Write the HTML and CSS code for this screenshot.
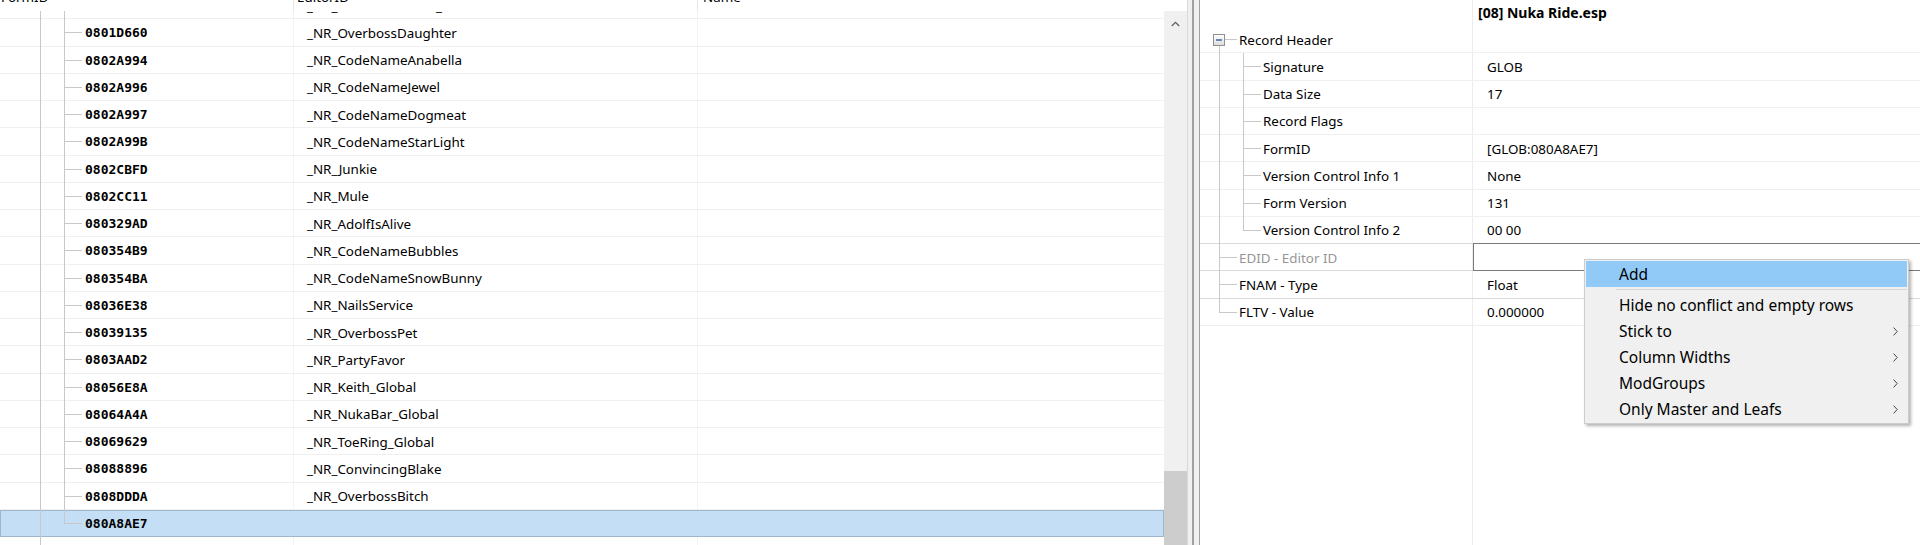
FILE: index.html
```html
<!DOCTYPE html>
<html lang="en">
<head>
  <meta charset="UTF-8">
  <title>xEdit - Nuka Ride.esp</title>
  <link rel="stylesheet" href="styles.css">
</head>
<body>

<div class="app">

  <!-- record list -->
  <section class="left">
    <div class="vt-header">
      <div class="hcol h-form">FormID</div>
      <div class="hcol h-edid">EditorID</div>
      <div class="hcol h-name">Name</div>
    </div>

    <div class="vt-body">
      <div class="rows">
        <div class="rows-in">
          <div class="row"><div class="c-form"><span class="g0"></span><span class="g-line"></span><span class="g-line"></span></div><div class="c-edid">_NR_OverbossGuard_Global</div><div class="c-name"></div></div>
          <div class="row"><div class="c-form"><span class="g0"></span><span class="g-line"></span><span class="g-branch"></span><span class="fid">0801D660</span></div><div class="c-edid">_NR_OverbossDaughter</div><div class="c-name"></div></div>
          <div class="row"><div class="c-form"><span class="g0"></span><span class="g-line"></span><span class="g-branch"></span><span class="fid">0802A994</span></div><div class="c-edid">_NR_CodeNameAnabella</div><div class="c-name"></div></div>
          <div class="row"><div class="c-form"><span class="g0"></span><span class="g-line"></span><span class="g-branch"></span><span class="fid">0802A996</span></div><div class="c-edid">_NR_CodeNameJewel</div><div class="c-name"></div></div>
          <div class="row"><div class="c-form"><span class="g0"></span><span class="g-line"></span><span class="g-branch"></span><span class="fid">0802A997</span></div><div class="c-edid">_NR_CodeNameDogmeat</div><div class="c-name"></div></div>
          <div class="row"><div class="c-form"><span class="g0"></span><span class="g-line"></span><span class="g-branch"></span><span class="fid">0802A99B</span></div><div class="c-edid">_NR_CodeNameStarLight</div><div class="c-name"></div></div>
          <div class="row"><div class="c-form"><span class="g0"></span><span class="g-line"></span><span class="g-branch"></span><span class="fid">0802CBFD</span></div><div class="c-edid">_NR_Junkie</div><div class="c-name"></div></div>
          <div class="row"><div class="c-form"><span class="g0"></span><span class="g-line"></span><span class="g-branch"></span><span class="fid">0802CC11</span></div><div class="c-edid">_NR_Mule</div><div class="c-name"></div></div>
          <div class="row"><div class="c-form"><span class="g0"></span><span class="g-line"></span><span class="g-branch"></span><span class="fid">080329AD</span></div><div class="c-edid">_NR_AdolfIsAlive</div><div class="c-name"></div></div>
          <div class="row"><div class="c-form"><span class="g0"></span><span class="g-line"></span><span class="g-branch"></span><span class="fid">080354B9</span></div><div class="c-edid">_NR_CodeNameBubbles</div><div class="c-name"></div></div>
          <div class="row"><div class="c-form"><span class="g0"></span><span class="g-line"></span><span class="g-branch"></span><span class="fid">080354BA</span></div><div class="c-edid">_NR_CodeNameSnowBunny</div><div class="c-name"></div></div>
          <div class="row"><div class="c-form"><span class="g0"></span><span class="g-line"></span><span class="g-branch"></span><span class="fid">08036E38</span></div><div class="c-edid">_NR_NailsService</div><div class="c-name"></div></div>
          <div class="row"><div class="c-form"><span class="g0"></span><span class="g-line"></span><span class="g-branch"></span><span class="fid">08039135</span></div><div class="c-edid">_NR_OverbossPet</div><div class="c-name"></div></div>
          <div class="row"><div class="c-form"><span class="g0"></span><span class="g-line"></span><span class="g-branch"></span><span class="fid">0803AAD2</span></div><div class="c-edid">_NR_PartyFavor</div><div class="c-name"></div></div>
          <div class="row"><div class="c-form"><span class="g0"></span><span class="g-line"></span><span class="g-branch"></span><span class="fid">08056E8A</span></div><div class="c-edid">_NR_Keith_Global</div><div class="c-name"></div></div>
          <div class="row"><div class="c-form"><span class="g0"></span><span class="g-line"></span><span class="g-branch"></span><span class="fid">08064A4A</span></div><div class="c-edid">_NR_NukaBar_Global</div><div class="c-name"></div></div>
          <div class="row"><div class="c-form"><span class="g0"></span><span class="g-line"></span><span class="g-branch"></span><span class="fid">08069629</span></div><div class="c-edid">_NR_ToeRing_Global</div><div class="c-name"></div></div>
          <div class="row"><div class="c-form"><span class="g0"></span><span class="g-line"></span><span class="g-branch"></span><span class="fid">08088896</span></div><div class="c-edid">_NR_ConvincingBlake</div><div class="c-name"></div></div>
          <div class="row"><div class="c-form"><span class="g0"></span><span class="g-line"></span><span class="g-branch"></span><span class="fid">0808DDDA</span></div><div class="c-edid">_NR_OverbossBitch</div><div class="c-name"></div></div>
          <div class="row selected"><div class="c-form"><span class="g0"></span><span class="g-line"></span><span class="g-branch last"></span><span class="fid">080A8AE7</span></div><div class="c-edid"></div><div class="c-name"></div></div>
          <div class="row"><div class="c-form"><span class="g0"></span><span class="g-branch"><svg class="xbox" width="12" height="12" viewBox="0 0 12 12"><rect x="0.5" y="0.5" width="11" height="11" fill="#f4f4f4" stroke="#9a9a9a"/><path d="M3 6h6M6 3v6" stroke="#1e3c96"/></svg></span></div><div class="c-edid"></div><div class="c-name"></div></div>
        </div>
      </div>
      <div class="vscroll">
        <div class="sb-arrow">
          <svg width="9" height="6" viewBox="0 0 9 6"><polyline points="0.8,5 4.5,1.3 8.2,5" fill="none" stroke="#606060" stroke-width="1.3"/></svg>
        </div>
        <div class="sb-thumb"></div>
      </div>
    </div>
  </section>

  <div class="splitter"><span class="grip"></span></div>

  <!-- record view -->
  <section class="right">
    <div class="pv-header">
      <div class="ph-label"></div>
      <div class="ph-value">[08] Nuka Ride.esp</div>
    </div>

    <div class="prow">
      <div class="p-label"><span class="pg0"></span><span class="g-branch top"><svg class="xbox" width="12" height="12" viewBox="0 0 12 12"><defs><linearGradient id="bx" x1="0" y1="0" x2="0" y2="1"><stop offset="0" stop-color="#ffffff"/><stop offset="1" stop-color="#dcdcdc"/></linearGradient></defs><rect x="0.5" y="0.5" width="11" height="11" fill="url(#bx)" stroke="#8f8f8f"/><path d="M3 6h6" stroke="#1e3c96" stroke-width="1.2"/></svg></span><span class="lbl">Record Header</span></div>
      <div class="p-value"></div>
    </div>
    <div class="prow">
      <div class="p-label"><span class="pg0"></span><span class="g-line"></span><span class="g-branch"></span><span class="lbl">Signature</span></div>
      <div class="p-value">GLOB</div>
    </div>
    <div class="prow">
      <div class="p-label"><span class="pg0"></span><span class="g-line"></span><span class="g-branch"></span><span class="lbl">Data Size</span></div>
      <div class="p-value">17</div>
    </div>
    <div class="prow">
      <div class="p-label"><span class="pg0"></span><span class="g-line"></span><span class="g-branch"></span><span class="lbl">Record Flags</span></div>
      <div class="p-value"></div>
    </div>
    <div class="prow">
      <div class="p-label"><span class="pg0"></span><span class="g-line"></span><span class="g-branch"></span><span class="lbl">FormID</span></div>
      <div class="p-value">[GLOB:080A8AE7]</div>
    </div>
    <div class="prow">
      <div class="p-label"><span class="pg0"></span><span class="g-line"></span><span class="g-branch"></span><span class="lbl">Version Control Info 1</span></div>
      <div class="p-value">None</div>
    </div>
    <div class="prow">
      <div class="p-label"><span class="pg0"></span><span class="g-line"></span><span class="g-branch"></span><span class="lbl">Form Version</span></div>
      <div class="p-value">131</div>
    </div>
    <div class="prow strong">
      <div class="p-label"><span class="pg0"></span><span class="g-line"></span><span class="g-branch last"></span><span class="lbl">Version Control Info 2</span></div>
      <div class="p-value">00 00</div>
    </div>
    <div class="prow strong">
      <div class="p-label"><span class="pg0"></span><span class="g-branch"></span><span class="lbl muted">EDID - Editor ID</span></div>
      <div class="p-value"><div class="edit"></div></div>
    </div>
    <div class="prow strong">
      <div class="p-label"><span class="pg0"></span><span class="g-branch"></span><span class="lbl">FNAM - Type</span></div>
      <div class="p-value">Float</div>
    </div>
    <div class="prow">
      <div class="p-label"><span class="pg0"></span><span class="g-branch last"></span><span class="lbl">FLTV - Value</span></div>
      <div class="p-value">0.000000</div>
    </div>
  </section>

  <!-- popup menu -->
  <div class="menu">
    <div class="mi hot">Add</div>
    <div class="msep"></div>
    <div class="mi">Hide no conflict and empty rows</div>
    <div class="mi">Stick to <svg width="5" height="9" viewBox="0 0 5 9"><polyline points="0.6,0.6 4.2,4.5 0.6,8.4" fill="none" stroke="#444" stroke-width="1"/></svg></div>
    <div class="mi">Column Widths <svg width="5" height="9" viewBox="0 0 5 9"><polyline points="0.6,0.6 4.2,4.5 0.6,8.4" fill="none" stroke="#444" stroke-width="1"/></svg></div>
    <div class="mi">ModGroups <svg width="5" height="9" viewBox="0 0 5 9"><polyline points="0.6,0.6 4.2,4.5 0.6,8.4" fill="none" stroke="#444" stroke-width="1"/></svg></div>
    <div class="mi">Only Master and Leafs <svg width="5" height="9" viewBox="0 0 5 9"><polyline points="0.6,0.6 4.2,4.5 0.6,8.4" fill="none" stroke="#444" stroke-width="1"/></svg></div>
  </div>

</div>

</body>
</html>
```

FILE: styles.css
```css
* {
  box-sizing: border-box;
}
html, body {
  margin: 0;
  height: 100%;
}
body {
  font-family: "Noto Sans", "Open Sans", sans-serif;
  font-size: 13.4px;
  color: #000;
  background: #fff;
  overflow: hidden;
}
.app {
  position: relative;
  display: flex;
  height: 545px;
}

/* left: record list */
.left {
  width: 1188px;
  flex: none;
  display: flex;
  flex-direction: column;
  border-right: 1px solid #d9d9d9;
  overflow: hidden;
}
.vt-header {
  flex: none;
  display: flex;
  height: 27px;
  margin-top: -16px;
  line-height: 27px;
}
.hcol {
  border-right: 1px solid #e5e5e5;
  white-space: nowrap;
}
.h-form {
  width: 294px;
  padding-left: 1px;
}
.h-edid {
  width: 404px;
  padding-left: 3px;
}
.h-name {
  flex: 1;
  padding-left: 5px;
  border-right: none;
}
.vt-body {
  flex: 1;
  display: flex;
  overflow: hidden;
}
.rows {
  width: 1164px;
  flex: none;
  overflow: hidden;
  background:
    linear-gradient(#f3f3f3, #f3f3f3) 293px 0 / 1px 100% no-repeat,
    linear-gradient(#f3f3f3, #f3f3f3) 697px 0 / 1px 100% no-repeat;
}
.rows-in {
  margin-top: -19px;
}
.row {
  display: flex;
  height: 27.25px;
  background: linear-gradient(#f0f0f0, #f0f0f0) 0 100% / 100% 1px no-repeat;
}
.row.selected {
  background: #c3def5;
  box-shadow: inset 0 0 0 1px #9fb6cc;
}
.c-form {
  width: 293px;
  display: flex;
}
.c-edid {
  width: 405px;
  padding-left: 14px;
  display: flex;
  align-items: center;
  white-space: nowrap;
}
.c-name {
  flex: 1;
}
.fid {
  align-self: center;
  padding-left: 3px;
  font-family: "DejaVu Sans Mono", monospace;
  font-weight: bold;
  font-size: 13px;
}

/* tree lines */
.g0 {
  width: 40px;
  flex: none;
}
.g-line {
  width: 24px;
  flex: none;
  background: linear-gradient(#c8c8c8, #c8c8c8) 0 0 / 1px 100% no-repeat;
}
.g-branch {
  width: 18px;
  flex: none;
  display: flex;
  align-items: center;
  background:
    linear-gradient(#c8c8c8, #c8c8c8) 0 0 / 1px 100% no-repeat,
    linear-gradient(#c8c8c8, #c8c8c8) 0 50% / 100% 1px no-repeat;
}
.g-branch.last {
  background:
    linear-gradient(#c8c8c8, #c8c8c8) 0 0 / 1px 50% no-repeat,
    linear-gradient(#c8c8c8, #c8c8c8) 0 50% / 100% 1px no-repeat;
}
.g-branch.top {
  background:
    linear-gradient(#c8c8c8, #c8c8c8) 0 100% / 1px 50% no-repeat,
    linear-gradient(#c8c8c8, #c8c8c8) 0 50% / 100% 1px no-repeat;
}
.xbox {
  display: block;
  margin-left: -6px;
  flex: none;
}

/* scrollbar */
.vscroll {
  width: 23px;
  flex: none;
  display: flex;
  flex-direction: column;
  background: #f0f0f0;
}
.sb-arrow {
  height: 25px;
  display: flex;
  align-items: center;
  justify-content: center;
}
.sb-thumb {
  margin-top: auto;
  height: 74px;
  background: #cdcdcd;
}

/* splitter */
.splitter {
  width: 11px;
  flex: none;
  display: flex;
  justify-content: center;
  background: #f0f0f0;
}
.grip {
  width: 2px;
  margin-left: -1px;
  background: #a0a0a0;
}

/* right: record view */
.right {
  flex: 1;
  display: flex;
  flex-direction: column;
  border-left: 1px solid #a0a0a0;
  background: linear-gradient(#ececec, #ececec) 272px 0 / 1px 100% no-repeat;
}
.pv-header {
  display: flex;
  height: 26px;
  line-height: 26px;
}
.ph-label {
  width: 273px;
}
.ph-value {
  padding-left: 5px;
  font-size: 14px;
  font-weight: bold;
}
.prow {
  display: flex;
  height: 27.25px;
  background: linear-gradient(#f0f0f0, #f0f0f0) 0 100% / 100% 1px no-repeat;
}
.prow.strong {
  background: linear-gradient(#dadada, #dadada) 0 100% / 100% 1px no-repeat;
}
.p-label {
  width: 273px;
  display: flex;
}
.pg0 {
  width: 19px;
  flex: none;
}
.lbl {
  align-self: center;
  padding-left: 2px;
  white-space: nowrap;
}
.lbl.muted {
  color: #969696;
}
.p-value {
  flex: 1;
  display: flex;
  align-items: center;
  padding-left: 14px;
}
.edit {
  align-self: stretch;
  flex: 1;
  margin: -1px 0 0 -14px;
  border: 1px solid #7a7a7a;
  border-right: none;
  background: #fff;
}

/* context menu */
.menu {
  position: absolute;
  left: 1584px;
  top: 259px;
  width: 325px;
  padding: 1px;
  font-size: 15.5px;
  background: #f0f0f0;
  border: 1px solid #cccccc;
  box-shadow: 2px 2px 3px rgba(0, 0, 0, 0.3);
}
.mi {
  height: 26px;
  display: flex;
  align-items: center;
  justify-content: space-between;
  padding: 0 9px 0 33px;
  white-space: nowrap;
}
.mi.hot {
  background: #91c9f7;
}
.msep {
  height: 5px;
  margin-left: 30px;
  padding-top: 2px;
}
.msep::before {
  content: "";
  display: block;
  border-top: 1px solid #d7d7d7;
}
```
